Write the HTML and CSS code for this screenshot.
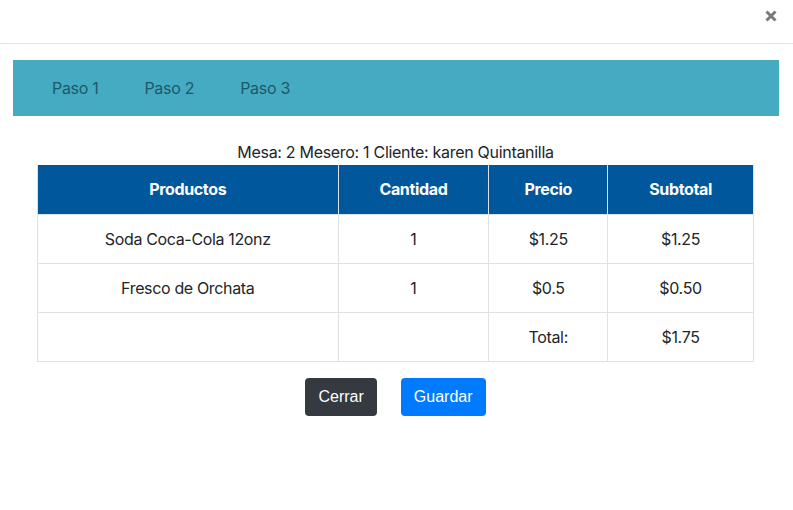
FILE: index.html
```html
<!DOCTYPE html>
<html lang="es">
<head>
<meta charset="utf-8">
<title>Orden</title>
<link rel="stylesheet" href="styles.css">
</head>
<body>
<div class="modal">
  <div class="modal-header">
    <button class="close" aria-label="Cerrar">
      <svg width="12" height="12" viewBox="0 0 12 12"><path d="M1.5 1.5 L10.5 10.5 M10.5 1.5 L1.5 10.5" stroke="#7a7a7a" stroke-width="3" stroke-linecap="butt"/></svg>
    </button>
  </div>
  <div class="modal-body">
    <nav class="steps">
      <a class="step">Paso 1</a>
      <a class="step">Paso 2</a>
      <a class="step">Paso 3</a>
    </nav>
    <div class="order">
      <p class="info">Mesa: 2 Mesero: 1 Cliente: karen Quintanilla</p>
      <table class="items">
        <colgroup>
          <col class="c1"><col class="c2"><col class="c3"><col class="c4">
        </colgroup>
        <thead>
          <tr><th>Productos</th><th>Cantidad</th><th>Precio</th><th>Subtotal</th></tr>
        </thead>
        <tbody>
          <tr><td>Soda Coca-Cola 12onz</td><td>1</td><td>$1.25</td><td>$1.25</td></tr>
          <tr><td>Fresco de Orchata</td><td>1</td><td>$0.5</td><td>$0.50</td></tr>
          <tr><td></td><td></td><td>Total:</td><td>$1.75</td></tr>
        </tbody>
      </table>
      <div class="actions">
        <button class="btn btn-dark">Cerrar</button>
        <button class="btn btn-primary">Guardar</button>
      </div>
    </div>
  </div>
</div>
</body>
</html>
```
FILE: styles.css
```css
* { box-sizing: border-box; }
html, body { margin: 0; padding: 0; background: #fff; }
body {
  font-family: Inter, "Noto Sans", sans-serif;
  font-size: 16px;
  color: #212529;
  width: 793px;
  height: 510px;
  overflow: hidden;
}
.modal { width: 793px; }
.modal-header {
  height: 44px;
  border-bottom: 1px solid #e3e6e9;
  display: flex;
  justify-content: flex-end;
  align-items: flex-start;
  padding: 10px 16px 0 0;
}
.close {
  border: 0;
  background: none;
  padding: 0;
  width: 12px;
  height: 12px;
  display: flex;
}
.modal-body { padding: 16px 14px 0 13px; }
.steps {
  height: 56px;
  background: #45abc2;
  display: flex;
  align-items: center;
  padding-left: 16px;
}
.step {
  color: #1e5868;
  font-size: 16px;
  letter-spacing: -0.3px;
  padding: 0 23px 0 23px;
}
.order {
  width: 717px;
  margin: 24px 0 0 24px;
}
.info {
  margin: 0;
  text-align: center;
  font-size: 16px;
  line-height: 25px;
  letter-spacing: -0.3px;
}
.items {
  width: 717px;
  border-collapse: collapse;
  font-size: 16px;
  letter-spacing: -0.35px;
}
.c1 { width: 301px; }
.c2 { width: 151px; }
.c3 { width: 119px; }
.c4 { width: 146px; }
.items th, .items td {
  border: 1px solid #dee2e6;
  text-align: center;
  padding: 0;
}
.items th {
  height: 49px;
  background: #00579b;
  color: #fff;
  font-weight: 700;
  border-color: #dee2e6;
  border-top: 0;
}
.items td { height: 49px; }
.actions {
  display: flex;
  justify-content: center;
  gap: 24px;
  margin-top: 16px;
}
.btn {
  font-family: "Liberation Sans", Arial, sans-serif;
  font-size: 16px;
  line-height: 24px;
  padding: 7px 13px;
  border: 0;
  border-radius: 4px;
  color: #fff;
}
.btn-dark { background: #343a40; }
.btn-primary { background: #007bff; }
```
